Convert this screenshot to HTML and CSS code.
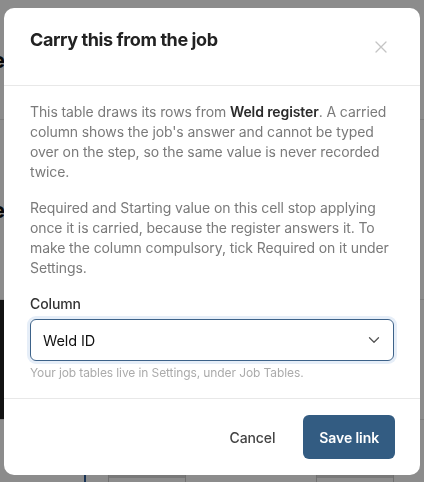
FILE: index.html
```html
<!DOCTYPE html>
<html lang="en">
<head>
<meta charset="utf-8">
<title>Carry this from the job</title>
<link rel="stylesheet" href="styles.css">
</head>
<body>
<div class="page">
  <div class="page-row row-a"><span class="peek">e</span></div>
  <div class="page-row row-b"><span class="peek">e</span></div>
  <div class="page-row row-c"></div>
  <div class="page-foot">
    <span class="chip chip-left"></span>
    <span class="chip chip-right"></span>
  </div>
</div>
<div class="overlay"></div>
<div class="modal" role="dialog" aria-labelledby="dlg-title">
  <div class="modal-header">
    <h2 id="dlg-title" class="modal-title">Carry this from the job</h2>
    <button class="close-btn" aria-label="Close">
      <svg width="12" height="12" viewBox="0 0 12 12"><path d="M1 1L11 11M11 1L1 11" stroke="#c4c4c4" stroke-width="1.3" stroke-linecap="round"/></svg>
    </button>
  </div>
  <div class="modal-body">
    <p class="text">This table draws its rows from <strong>Weld register</strong>. A carried column shows the job's answer and cannot be typed over on the step, so the same value is never recorded twice.</p>
    <p class="text">Required and Starting value on this cell stop applying once it is carried, because the register answers it. To make the column compulsory, tick Required on it under Settings.</p>
    <label class="field-label">Column</label>
    <div class="select">
      <span class="select-value">Weld ID</span>
      <svg class="chevron" width="12" height="8" viewBox="0 0 12 8"><path d="M1.5 1.8L6 6.2L10.5 1.8" fill="none" stroke="#555" stroke-width="1.3" stroke-linecap="round" stroke-linejoin="round"/></svg>
    </div>
    <p class="help">Your job tables live in Settings, under Job Tables.</p>
  </div>
  <div class="modal-footer">
    <button class="btn btn-ghost">Cancel</button>
    <button class="btn btn-primary">Save link</button>
  </div>
</div>
</body>
</html>
```

FILE: styles.css
```css
* { box-sizing: border-box; }
html, body {
  margin: 0;
  padding: 0;
  height: 482px;
  overflow: hidden;
}
body {
  font-family: "Inter", "Liberation Sans", sans-serif;
  background: #ffffff;
  position: relative;
}
.page {
  height: 482px;
  display: flex;
  flex-direction: column;
  background: #fff;
}
.page-row {
  border-bottom: 1px solid #e4e4e4;
  display: flex;
  align-items: center;
}
.row-a { height: 120px; }
.row-b { height: 180px; }
.row-c { height: 120px; background: linear-gradient(90deg, #222 0 6px, #fff 6px); }
.peek {
  font-weight: 700;
  font-size: 22px;
  color: #111;
  margin-left: -8px;
}
.page-foot {
  flex: 1;
  border-left: 2px solid #2d5d9c;
  margin-left: 84px;
  display: flex;
  align-items: flex-end;
}
.chip {
  width: 78px;
  height: 12px;
  border: 1px solid #ccc;
  border-bottom: 0;
  border-radius: 3px 3px 0 0;
  background: linear-gradient(#fff 0 4px, #ddd 4px 7px, #fff 7px);
}
.chip-left { margin-left: 22px; }
.chip-right { margin-left: 130px; }
.overlay {
  position: fixed;
  inset: 0;
  background: rgba(0, 0, 0, 0.45);
}
.modal {
  position: fixed;
  top: 8px;
  left: 4px;
  width: 416px;
  height: 467px;
  background: #fff;
  border-radius: 10px;
  display: flex;
  flex-direction: column;
  overflow: hidden;
}
.modal-header {
  display: flex;
  justify-content: space-between;
  align-items: flex-start;
  padding: 20px 26px 0 26px;
  height: 78px;
  border-bottom: 1px solid #e8e8e8;
}
.modal-title {
  margin: 0;
  font-size: 18px;
  line-height: 24px;
  font-weight: 700;
  color: #222;
  letter-spacing: -0.4px;
}
.close-btn {
  margin-top: 6px;
  width: 26px;
  height: 26px;
  border: 0;
  background: transparent;
  padding: 0;
  display: flex;
  align-items: center;
  justify-content: center;
}
.modal-body {
  padding: 16px 26px 17px;
  border-bottom: 1px solid #e8e8e8;
  letter-spacing: -0.1px;
}
.text {
  margin: 0 0 16px;
  font-size: 14px;
  line-height: 20px;
  color: #7a7a7a;
}
.text strong {
  color: #2a2a2a;
  font-weight: 600;
}
.field-label {
  display: block;
  font-size: 14px;
  line-height: 20px;
  color: #333;
  font-weight: 500;
  margin-bottom: 5px;
}
.select {
  height: 42px;
  border: 1px solid #3d6289;
  border-radius: 6px;
  box-shadow: 0 0 0 3px #e6eef8;
  display: flex;
  align-items: center;
  justify-content: space-between;
  padding: 0 13px 0 12px;
}
.select-value {
  font-size: 14.5px;
  color: #111;
}
.help {
  margin: 4px 0 0;
  font-size: 12px;
  line-height: 16px;
  color: #ababab;
}
.modal-footer {
  flex: 1;
  display: flex;
  justify-content: flex-end;
  align-items: flex-start;
  padding: 16px 25px 16px 26px;
  gap: 12px;
}
.btn {
  font-family: inherit;
  font-size: 14px;
  height: 44px;
  border-radius: 6px;
  border: 0;
  padding: 0 16px;
  font-weight: 600;
  white-space: nowrap;
  letter-spacing: -0.1px;
}
.btn-ghost {
  background: transparent;
  color: #444;
  font-weight: 500;
}
.btn-primary {
  background: #335c82;
  color: #fff;
  min-width: 90px;
}
```
